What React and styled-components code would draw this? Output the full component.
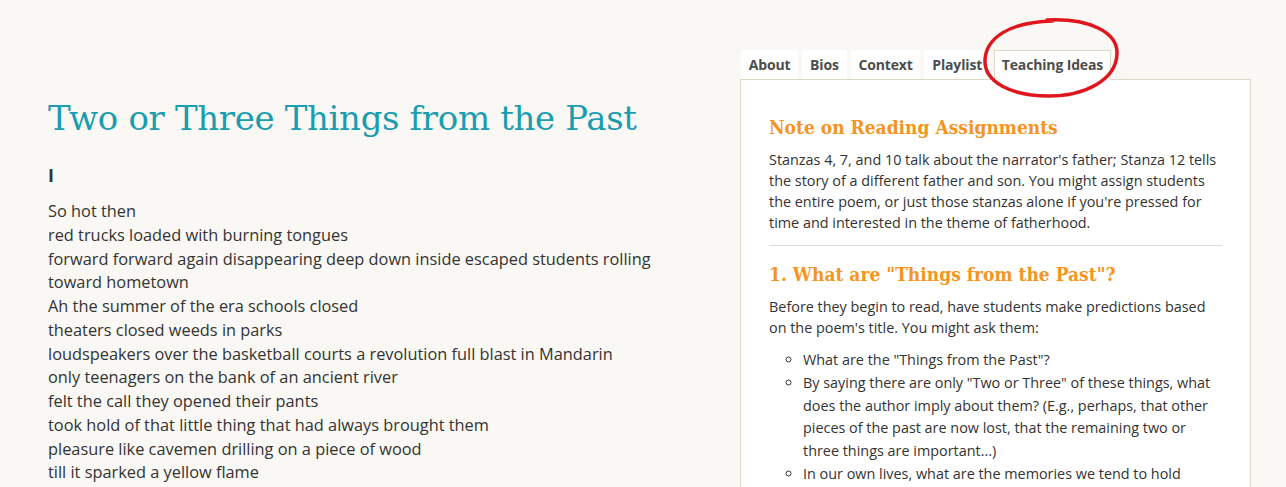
import styled, { createGlobalStyle } from "styled-components";

const GlobalStyle = createGlobalStyle`
  html, body {
    margin: 0;
    padding: 0;
    background: #faf8f4;
  }
  body {
    font-family: "Open Sans", "Liberation Sans", sans-serif;
    color: #333;
  }
`;

const Page = styled.div`
  display: flex;
  align-items: flex-start;
  padding: 50px 0 0 48px;
  height: 437px;
  overflow: hidden;
`;

const PoemColumn = styled.div`
  width: 692px;
  flex-shrink: 0;
`;

const Title = styled.h1`
  margin: 44px 0 0;
  font-family: "DejaVu Serif", "Liberation Serif", serif;
  font-weight: 300;
  font-size: 34px;
  line-height: 48px;
  letter-spacing: -0.35px;
  color: #1a9db0;
`;

const StanzaMark = styled.div`
  margin-top: 21px;
  font-weight: 700;
  font-size: 18px;
  line-height: 24px;
  color: #333;
`;

const Poem = styled.div`
  margin-top: 13px;
  font-size: 16.35px;
  line-height: 23.75px;
  color: #333;
`;

const Line = styled.div``;

const Sidebar = styled.div`
  width: 511px;
  flex-shrink: 0;
  position: relative;
`;

const Tabs = styled.div`
  display: flex;
  gap: 4px;
  padding-left: 1px;
  position: relative;
  z-index: 1;
`;

const Tab = styled.div`
  background: #fff;
  padding: 0 6.8px;
  line-height: 27px;
  font-weight: 700;
  font-size: 14px;
  letter-spacing: -0.15px;
  color: #4d4d4d;
  box-sizing: border-box;
  border: 1px solid ${(p) => (p.$active ? "#ddd8c8" : "transparent")};
  border-bottom: none;
  height: ${(p) => (p.$active ? "30px" : "29px")};
`;

const Panel = styled.div`
  background: #fff;
  border: 1px solid #ddd8c8;
  padding: 34px 28px 0 28px;
  height: 420px;
  box-sizing: border-box;
  margin-top: -1px;
`;

const Heading = styled.h2`
  margin: 0 0 9px;
  font-family: "DejaVu Serif Condensed", "DejaVu Serif", "Liberation Serif", serif;
  font-stretch: condensed;
  font-weight: 700;
  font-size: 19px;
  line-height: 26px;
  color: #f7941d;
`;

const Para = styled.p`
  margin: 0;
  font-size: 14.4px;
  line-height: 21px;
  color: #333;
`;

const Rule = styled.hr`
  border: none;
  border-top: 1px solid #dcdcdc;
  margin: 12px 0 15px;
`;

const List = styled.ul`
  margin: 11px 0 0;
  padding: 0 8px 0 34px;
  list-style: circle;
`;

const Item = styled.li`
  font-size: 14.4px;
  line-height: 22.8px;
  color: #333;
`;

const Annotation = styled.svg`
  position: absolute;
  left: 241px;
  top: -34px;
  width: 141px;
  height: 84px;
  pointer-events: none;
  z-index: 2;
`;

const poem = [
  "So hot then",
  "red trucks loaded with burning tongues",
  "forward forward again disappearing deep down inside escaped students rolling",
  "toward hometown",
  "Ah the summer of the era schools closed",
  "theaters closed weeds in parks",
  "loudspeakers over the basketball courts a revolution full blast in Mandarin",
  "only teenagers on the bank of an ancient river",
  "felt the call they opened their pants",
  "took hold of that little thing that had always brought them",
  "pleasure like cavemen drilling on a piece of wood",
  "till it sparked a yellow flame",
];

const tabs = ["About", "Bios", "Context", "Playlist", "Teaching Ideas"];

export default function App() {
  return (
    <>
      <GlobalStyle />
      <Page>
        <PoemColumn>
          <Title>Two or Three Things from the Past</Title>
          <StanzaMark>I</StanzaMark>
          <Poem>
            {poem.map((l) => (
              <Line key={l}>{l}</Line>
            ))}
          </Poem>
        </PoemColumn>
        <Sidebar>
          <Tabs>
            {tabs.map((t) => (
              <Tab key={t} $active={t === "Teaching Ideas"}>
                {t}
              </Tab>
            ))}
          </Tabs>
          <Annotation viewBox="0 0 141 84">
            <path
              d="M66 4 C 108 2, 137 16, 136 38 C 135 64, 104 80, 68 80 C 30 80, 3 66, 4 44 C 5 22, 28 6, 72 5"
              fill="none"
              stroke="#e0161e"
              strokeWidth="3.5"
              strokeLinecap="round"
            />
          </Annotation>
          <Panel>
            <Heading>Note on Reading Assignments</Heading>
            <Para>
              Stanzas 4, 7, and 10 talk about the narrator's father; Stanza 12
              tells the story of a different father and son. You might assign
              students the entire poem, or just those stanzas alone if you're
              pressed for time and interested in the theme of fatherhood.
            </Para>
            <Rule />
            <Heading>1. What are "Things from the Past"?</Heading>
            <Para>
              Before they begin to read, have students make predictions based
              on the poem's title. You might ask them:
            </Para>
            <List>
              <Item>What are the "Things from the Past"?</Item>
              <Item>
                By saying there are only "Two or Three" of these things, what
                does the author imply about them? (E.g., perhaps, that other
                pieces of the past are now lost, that the remaining two or
                three things are important...)
              </Item>
              <Item>
                In our own lives, what are the memories we tend to hold onto?
              </Item>
            </List>
          </Panel>
        </Sidebar>
      </Page>
    </>
  );
}
